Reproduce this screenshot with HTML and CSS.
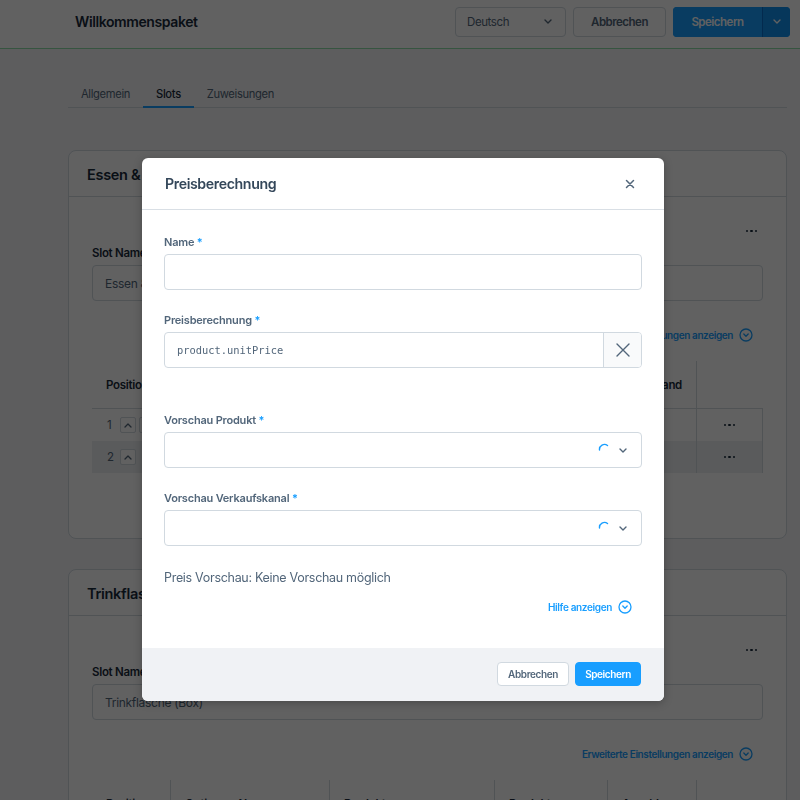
FILE: index.html
```html
<!DOCTYPE html>
<html lang="de">
<head>
<meta charset="utf-8">
<title>Willkommenspaket</title>
<link rel="stylesheet" href="styles.css">
</head>
<body>
<div class="page">
  <header class="smartbar">
    <h1 class="smartbar-title">Willkommenspaket</h1>
    <div class="smartbar-actions">
      <div class="lang-select">
        <span>Deutsch</span>
        <svg class="chev" width="8" height="5" viewBox="0 0 8 5"><path d="M1 1l3 3 3-3" fill="none" stroke="#52667a" stroke-width="1.4" stroke-linecap="round" stroke-linejoin="round"/></svg>
      </div>
      <button class="sb-btn sb-ghost">Abbrechen</button>
      <div class="sb-split">
        <button class="sb-btn sb-primary">Speichern</button>
        <span class="sb-toggle"><svg width="8" height="5" viewBox="0 0 8 5"><path d="M1 1l3 3 3-3" fill="none" stroke="#fff" stroke-width="1.4" stroke-linecap="round" stroke-linejoin="round"/></svg></span>
      </div>
    </div>
  </header>

  <main class="content">
    <nav class="tabs">
      <span class="tab">Allgemein</span>
      <span class="tab tab-active">Slots</span>
      <span class="tab">Zuweisungen</span>
    </nav>

    <section class="card card-first">
      <div class="card-header">Essen &amp; Trinken</div>
      <div class="card-body">
        <div class="card-toolbar"><span class="dots"><i></i><i></i><i></i></span></div>
        <div class="bg-label">Slot Name</div>
        <div class="bg-input">Essen &amp; Trinken</div>
        <div class="bg-link-row">
          <span class="bg-link">Erweiterte Einstellungen anzeigen</span>
          <svg class="circ" width="14" height="14" viewBox="0 0 14 14"><circle cx="7" cy="7" r="6" fill="none" stroke="#189eff" stroke-width="1.3"/><path d="M4.8 6l2.2 2.2L9.2 6" fill="none" stroke="#189eff" stroke-width="1.3" stroke-linecap="round" stroke-linejoin="round"/></svg>
        </div>
        <div class="grid">
          <div class="gh">Position</div>
          <div class="gh">Name</div>
          <div class="gh">Produkt</div>
          <div class="gh">Menge</div>
          <div class="gh gh-right">Bestand</div>
          <div class="gh gh-last"></div>

          <div class="gc gc-pos"><span class="num">1</span><span class="arrow-btn"><svg width="8" height="5" viewBox="0 0 8 5"><path d="M1 4l3-3 3 3" fill="none" stroke="#52667a" stroke-width="1.3" stroke-linecap="round" stroke-linejoin="round"/></svg></span><span class="arrow-btn"><svg width="8" height="5" viewBox="0 0 8 5"><path d="M1 1l3 3 3-3" fill="none" stroke="#52667a" stroke-width="1.3" stroke-linecap="round" stroke-linejoin="round"/></svg></span></div>
          <div class="gc">Essen</div>
          <div class="gc">Snackbox</div>
          <div class="gc">1</div>
          <div class="gc">24</div>
          <div class="gc gc-last"><span class="dots"><i></i><i></i><i></i></span></div>

          <div class="gc gc-pos alt"><span class="num">2</span><span class="arrow-btn"><svg width="8" height="5" viewBox="0 0 8 5"><path d="M1 4l3-3 3 3" fill="none" stroke="#52667a" stroke-width="1.3" stroke-linecap="round" stroke-linejoin="round"/></svg></span></div>
          <div class="gc alt">Trinken</div>
          <div class="gc alt">Saftbox</div>
          <div class="gc alt">1</div>
          <div class="gc alt">12</div>
          <div class="gc gc-last alt"><span class="dots"><i></i><i></i><i></i></span></div>
        </div>
      </div>
    </section>

    <section class="card">
      <div class="card-header">Trinkflasche (Box)</div>
      <div class="card-body">
        <div class="card-toolbar"><span class="dots"><i></i><i></i><i></i></span></div>
        <div class="bg-label">Slot Name</div>
        <div class="bg-input">Trinkflasche (Box)</div>
        <div class="bg-link-row">
          <span class="bg-link">Erweiterte Einstellungen anzeigen</span>
          <svg class="circ" width="14" height="14" viewBox="0 0 14 14"><circle cx="7" cy="7" r="6" fill="none" stroke="#189eff" stroke-width="1.3"/><path d="M4.8 6l2.2 2.2L9.2 6" fill="none" stroke="#189eff" stroke-width="1.3" stroke-linecap="round" stroke-linejoin="round"/></svg>
        </div>
        <div class="grid">
          <div class="gh">Position</div>
          <div class="gh">Optionen-Name</div>
          <div class="gh">Produkt</div>
          <div class="gh">Produktnummer</div>
          <div class="gh">Anzahl</div>
          <div class="gh gh-last"></div>
        </div>
      </div>
    </section>
  </main>
</div>

<div class="overlay"></div>

<div class="modal" role="dialog" aria-label="Preisberechnung">
  <div class="modal-header">
    <h2 class="modal-title">Preisberechnung</h2>
    <svg class="modal-close" width="10" height="10" viewBox="0 0 10 10"><path d="M1.5 1.5l7 7M8.5 1.5l-7 7" stroke="#52667a" stroke-width="1.5" stroke-linecap="round"/></svg>
  </div>
  <div class="modal-body">
    <div class="field">
      <label class="label">Name <span class="req">*</span></label>
      <div class="input"></div>
    </div>
    <div class="field">
      <label class="label">Preisberechnung <span class="req">*</span></label>
      <div class="input input-suffix">
        <span class="code">product.unitPrice</span>
        <span class="suffix"><svg width="14" height="14" viewBox="0 0 14 14"><path d="M1 1l12 12M13 1L1 13" stroke="#52667a" stroke-width="1.4" stroke-linecap="round"/></svg></span>
      </div>
    </div>
    <div class="field field-gap">
      <label class="label">Vorschau Produkt <span class="req">*</span></label>
      <div class="input input-select">
        <svg class="spinner" width="13" height="13" viewBox="0 0 13 13"><path d="M1.5 7A5 5 0 0 1 9.5 2.5" fill="none" stroke="#189eff" stroke-width="1.4" stroke-linecap="round"/></svg>
        <svg class="sel-chev" width="8" height="5" viewBox="0 0 8 5"><path d="M1 1l3 3 3-3" fill="none" stroke="#52667a" stroke-width="1.4" stroke-linecap="round" stroke-linejoin="round"/></svg>
      </div>
    </div>
    <div class="field">
      <label class="label">Vorschau Verkaufskanal <span class="req">*</span></label>
      <div class="input input-select">
        <svg class="spinner" width="13" height="13" viewBox="0 0 13 13"><path d="M1.5 7A5 5 0 0 1 9.5 2.5" fill="none" stroke="#189eff" stroke-width="1.4" stroke-linecap="round"/></svg>
        <svg class="sel-chev" width="8" height="5" viewBox="0 0 8 5"><path d="M1 1l3 3 3-3" fill="none" stroke="#52667a" stroke-width="1.4" stroke-linecap="round" stroke-linejoin="round"/></svg>
      </div>
    </div>
    <p class="preview">Preis Vorschau: Keine Vorschau möglich</p>
    <div class="help-row">
      <span class="help-link">Hilfe anzeigen</span>
      <svg width="14" height="14" viewBox="0 0 14 14"><circle cx="7" cy="7" r="6" fill="none" stroke="#189eff" stroke-width="1.3"/><path d="M4.8 6l2.2 2.2L9.2 6" fill="none" stroke="#189eff" stroke-width="1.3" stroke-linecap="round" stroke-linejoin="round"/></svg>
    </div>
  </div>
  <div class="modal-footer">
    <button class="btn btn-default">Abbrechen</button>
    <button class="btn btn-primary">Speichern</button>
  </div>
</div>
</body>
</html>
```

FILE: styles.css
```css
* { box-sizing: border-box; }

html, body {
  margin: 0;
  height: 800px;
  overflow: hidden;
}

body {
  font-family: Inter, "Noto Sans", sans-serif;
  background: #f4f5f7;
  color: #1a2b3c;
  position: relative;
}

/* ---------- Smart bar ---------- */
.smartbar {
  height: 49px;
  background: #fff;
  border-bottom: 1px solid #8fe0a8;
  display: flex;
  align-items: center;
  justify-content: space-between;
  padding: 0 10px 5px 75px;
}

.smartbar-title {
  margin: 0;
  font-size: 14px;
  letter-spacing: -0.4px;
  font-weight: 600;
  color: #1a2b3c;
}

.smartbar-actions {
  display: flex;
  align-items: center;
  gap: 7px;
}

.lang-select {
  width: 111px;
  height: 30px;
  border: 1px solid #d1d9e0;
  border-radius: 4px;
  background: #fff;
  display: flex;
  align-items: center;
  justify-content: space-between;
  padding: 0 13px 0 11px;
  font-size: 11.5px;
  letter-spacing: -0.4px;
  color: #52667a;
}

.sb-btn {
  font-family: inherit;
  height: 30px;
  border-radius: 4px;
  font-size: 11.5px;
  letter-spacing: -0.5px;
  font-weight: 600;
  padding: 0;
  cursor: pointer;
}

.sb-ghost {
  width: 93px;
  border: 1px solid #d1d9e0;
  background: #fff;
  color: #52667a;
}

.sb-split {
  display: flex;
  width: 117px;
  height: 30px;
  border-radius: 4px;
  overflow: hidden;
  background: #189eff;
}

.sb-primary {
  width: 89px;
  border: 0;
  border-radius: 0;
  background: #189eff;
  color: #fff;
}

.sb-toggle {
  flex: 1;
  display: flex;
  align-items: center;
  justify-content: center;
  border-left: 1px solid #0870cc;
  background: #1190f0;
}

/* ---------- Content ---------- */
.content {
  padding: 30px 13px 0 68px;
}

.tabs {
  display: flex;
  border-bottom: 1px solid #d1d9e0;
  height: 29px;
}

.tab {
  padding: 7px 13px 0;
  font-size: 11.2px;
  letter-spacing: -0.35px;
  line-height: 16px;
  color: #52667a;
  border-bottom: 2px solid transparent;
  height: 29px;
}

.tab-active {
  color: #1a2b3c;
  font-weight: 500;
  border-bottom-color: #189eff;
}

.card {
  margin-top: 42px;
  background: #fff;
  border: 1px solid #d1d9e0;
  border-radius: 8px;
}

.card + .card {
  margin-top: 30px;
}

.card-header {
  height: 46px;
  padding: 14px 18px 0;
  font-size: 14.5px;
  letter-spacing: -0.3px;
  line-height: 20px;
  font-weight: 600;
  color: #1a2b3c;
  border-bottom: 1px solid #d1d9e0;
  white-space: nowrap;
}

.card-body {
  padding: 26px 23px 65px;
}

.card-toolbar {
  height: 16px;
  display: flex;
  justify-content: flex-end;
  align-items: center;
  padding-right: 6px;
}

.dots {
  display: inline-flex;
  gap: 2px;
}

.dots i {
  width: 2.5px;
  height: 2.5px;
  border-radius: 50%;
  background: #1a2b3c;
}

.bg-label {
  margin-top: 6px;
  font-size: 11.5px;
  letter-spacing: -0.3px;
  line-height: 16px;
  font-weight: 600;
  color: #1a2b3c;
}

.bg-input {
  margin-top: 4px;
  height: 36px;
  border: 1px solid #d1d9e0;
  border-radius: 4px;
  padding: 0 12px;
  display: flex;
  align-items: center;
  font-size: 12px;
  letter-spacing: -0.3px;
  color: #52667a;
}

.bg-link-row {
  margin-top: 26px;
  height: 16px;
  display: flex;
  justify-content: flex-end;
  align-items: center;
  gap: 6px;
  padding-right: 10px;
}

.bg-link {
  font-size: 10px;
  letter-spacing: -0.4px;
  font-weight: 600;
  color: #189eff;
}

.grid {
  margin-top: 18px;
  display: grid;
  grid-template-columns: 79px 159px 165px 113px 89px 1fr;
}

.gh {
  height: 48px;
  padding: 0 14px;
  display: flex;
  align-items: center;
  font-size: 11.5px;
  letter-spacing: -0.3px;
  font-weight: 600;
  color: #1a2b3c;
  border-right: 1px solid #d1d9e0;
  border-bottom: 1px solid #d1d9e0;
  white-space: nowrap;
  overflow: hidden;
}

.gh-right {
  justify-content: flex-end;
}

.gh-last, .gc-last {
  border-right: 0;
}

.gc {
  height: 32px;
  padding: 0 14px;
  display: flex;
  align-items: center;
  font-size: 11.5px;
  color: #52667a;
  border-right: 1px solid #d1d9e0;
}

.gc-pos {
  padding: 0 0 0 15px;
  gap: 3px;
}

.gc-last {
  justify-content: center;
}

.num {
  width: 10px;
}

.arrow-btn {
  width: 16px;
  height: 16px;
  border: 1px solid #d1d9e0;
  border-radius: 2px;
  display: inline-flex;
  align-items: center;
  justify-content: center;
  background: #fff;
}

.alt {
  background: #eceef1;
}

/* ---------- Overlay & modal ---------- */
.overlay {
  position: fixed;
  inset: 0;
  background: rgba(0, 0, 0, 0.62);
}

.modal {
  position: absolute;
  left: 142px;
  top: 158px;
  width: 522px;
  background: #fff;
  border-radius: 6px;
  overflow: hidden;
  box-shadow: 0 2px 8px rgba(0, 0, 0, 0.25);
}

.modal-header {
  height: 52px;
  border-bottom: 1px solid #d9dfe5;
  display: flex;
  align-items: center;
  justify-content: space-between;
  padding: 0 29px 0 23px;
}

.modal-title {
  margin: 0;
  font-size: 14.2px;
  letter-spacing: -0.4px;
  font-weight: 600;
  color: #34475a;
}

.modal-body {
  padding: 24px 22px 33px;
}

.field {
  margin-bottom: 22px;
}

.field-gap {
  margin-top: 44px;
}

.label {
  display: block;
  font-size: 11px;
  letter-spacing: -0.2px;
  line-height: 16px;
  font-weight: 600;
  color: #52667a;
  margin-bottom: 4px;
}

.req {
  color: #189eff;
}

.input {
  height: 36px;
  border: 1px solid #d1d9e0;
  border-radius: 4px;
  background: #fff;
}

.input-suffix {
  display: flex;
  align-items: stretch;
  overflow: hidden;
}

.code {
  flex: 1;
  display: flex;
  align-items: center;
  padding-left: 12px;
  font-family: "DejaVu Sans Mono", "Liberation Mono", monospace;
  font-size: 10.4px;
  color: #52667a;
}

.suffix {
  width: 38px;
  border-left: 1px solid #d1d9e0;
  background: #f9fafb;
  display: flex;
  align-items: center;
  justify-content: center;
}

.input-select {
  display: flex;
  align-items: center;
  justify-content: flex-end;
  padding-right: 14px;
  gap: 8px;
}

.spinner {
  margin-top: -2px;
}

.preview {
  margin: 0;
  font-size: 12.5px;
  letter-spacing: -0.3px;
  line-height: 20px;
  color: #52667a;
}

.help-row {
  margin-top: 11px;
  height: 16px;
  display: flex;
  justify-content: flex-end;
  align-items: center;
  gap: 6px;
  padding-right: 10px;
}

.help-link {
  font-size: 10px;
  letter-spacing: -0.35px;
  font-weight: 600;
  color: #189eff;
}

.modal-footer {
  background: #f0f2f5;
  padding: 14px 23px 15px;
  display: flex;
  justify-content: flex-end;
  gap: 6px;
}

.btn {
  font-family: inherit;
  height: 24px;
  border-radius: 4px;
  font-size: 10px;
  letter-spacing: -0.4px;
  font-weight: 600;
  padding: 0;
  cursor: pointer;
}

.btn-default {
  width: 72px;
  background: #fff;
  border: 1px solid #d1d9e0;
  color: #52667a;
}

.btn-primary {
  width: 66px;
  background: #189eff;
  border: 1px solid #189eff;
  color: #fff;
}
```
